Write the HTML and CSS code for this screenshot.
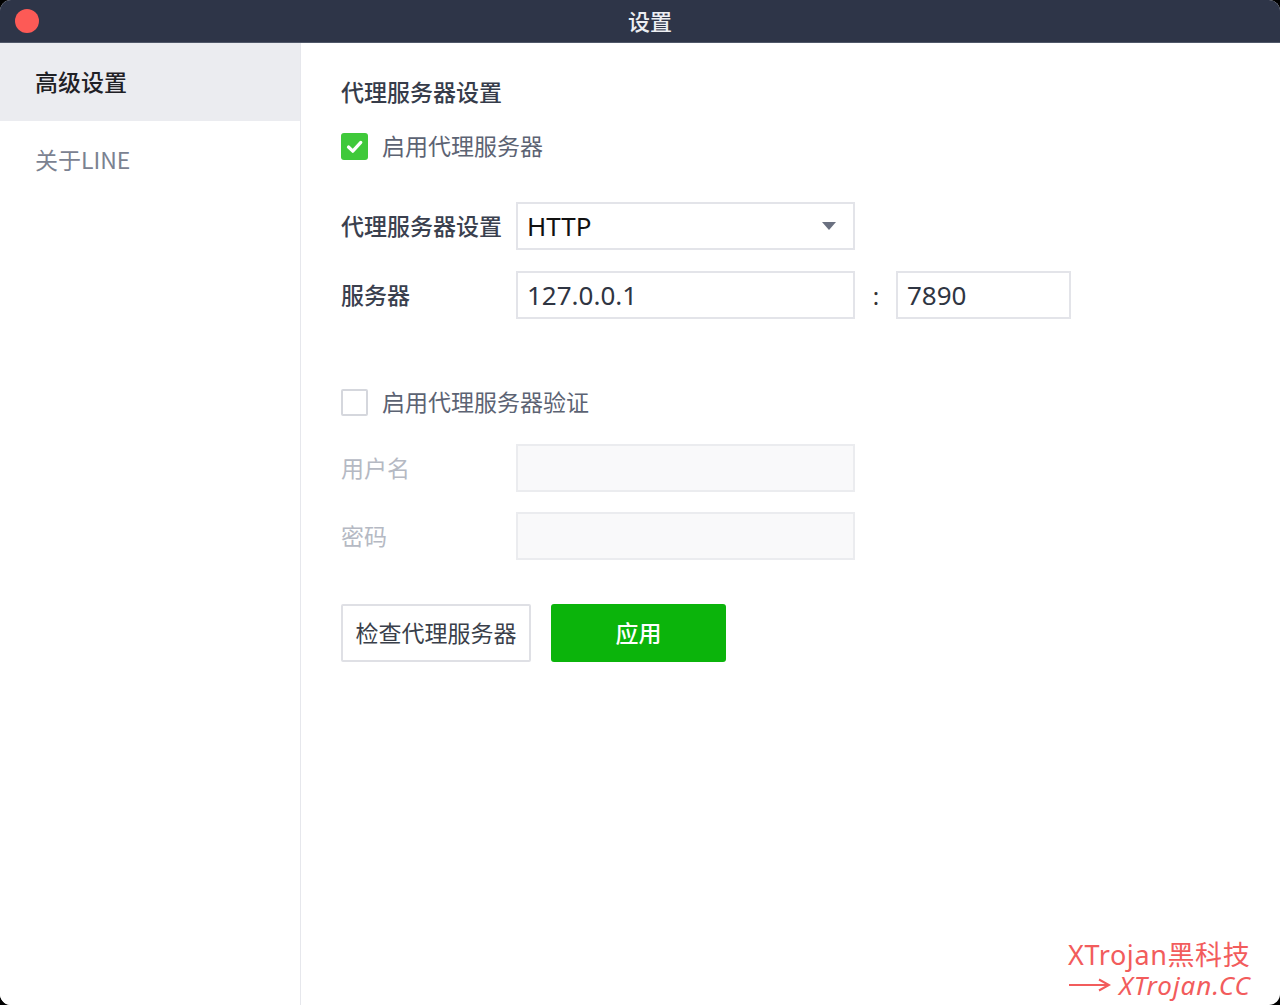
FILE: index.html
```html
<!DOCTYPE html>
<html lang="zh-CN">
<head>
<meta charset="utf-8">
<title>设置</title>
<link rel="stylesheet" href="styles.css">
</head>
<body>
<div class="window">
  <header class="titlebar">
    <span class="close-dot"></span>
    <span class="title">设置</span>
  </header>
  <div class="main">
    <nav class="sidebar">
      <div class="nav-item active">高级设置</div>
      <div class="nav-item">关于LINE</div>
    </nav>
    <section class="content">
      <h2 class="heading">代理服务器设置</h2>
      <label class="check-row">
        <span class="checkbox checked">
          <svg viewBox="0 0 27 27" width="27" height="27"><path d="M7.5 14 L11.8 18.2 L19.8 9.4" fill="none" stroke="#fff" stroke-width="3.2" stroke-linecap="round" stroke-linejoin="round"/></svg>
        </span>
        <span class="check-label">启用代理服务器</span>
      </label>

      <div class="form-row row-type">
        <span class="label">代理服务器设置</span>
        <div class="field select">
          <span class="value value-dark">HTTP</span>
          <svg class="caret" viewBox="0 0 14 8" width="14" height="8"><path d="M0 0 H14 L7 8 Z" fill="#6a7080"/></svg>
        </div>
      </div>
      <div class="form-row row-server">
        <span class="label">服务器</span>
        <div class="field"><span class="value">127.0.0.1</span></div>
        <span class="colon">:</span>
        <div class="field port"><span class="value">7890</span></div>
      </div>

      <label class="check-row check-auth">
        <span class="checkbox"></span>
        <span class="check-label">启用代理服务器验证</span>
      </label>

      <div class="form-row row-user">
        <span class="label disabled">用户名</span>
        <div class="field field-disabled"></div>
      </div>
      <div class="form-row row-pass">
        <span class="label disabled">密码</span>
        <div class="field field-disabled"></div>
      </div>

      <div class="buttons">
        <button class="btn btn-outline">检查代理服务器</button>
        <button class="btn btn-green">应用</button>
      </div>
    </section>
  </div>
  <div class="watermark">
    <div class="wm-line1">XTrojan黑科技</div>
    <div class="wm-line2"><svg class="wm-arrow" viewBox="0 0 42 14" width="42" height="14"><path d="M0 7 H40 M30 1.5 L40 7 L30 12.5" fill="none" stroke="#f25c5c" stroke-width="2"/></svg><span class="wm-site">XTrojan.CC</span></div>
  </div>
</div>
</body>
</html>
```

FILE: styles.css
```css
* { box-sizing: border-box; }
html, body {
  margin: 0;
  padding: 0;
  background: #000;
}
body {
  width: 1280px;
  height: 1005px;
  font-family: "Noto Sans", "Noto Sans CJK SC", sans-serif;
  overflow: hidden;
}
.window {
  position: relative;
  width: 1280px;
  height: 1005px;
  background: #fff;
  border-radius: 11px;
  overflow: hidden;
  display: flex;
  flex-direction: column;
}
.titlebar {
  position: relative;
  height: 43px;
  flex: 0 0 43px;
  background: #2e3548;
  border-bottom: 1px solid #505869;
  display: flex;
  align-items: center;
  justify-content: center;
}
.close-dot {
  position: absolute;
  left: 15px;
  top: 9px;
  width: 24px;
  height: 24px;
  border-radius: 50%;
  background: #fd5a56;
}
.title {
  color: #eceef2;
  font-family: "Noto Sans CJK SC", sans-serif;
  font-size: 22px;
  font-weight: 500;
  line-height: 42px;
  margin-top: -3px;
  margin-left: 20px;
}
.main {
  flex: 1;
  display: flex;
}
.sidebar {
  width: 301px;
  flex: 0 0 301px;
  border-right: 1px solid #e6e7ec;
  background: #fff;
}
.nav-item {
  height: 78px;
  display: flex;
  align-items: center;
  padding-left: 35px;
  padding-bottom: 3px;
  font-family: "Noto Sans CJK SC", sans-serif;
  font-size: 23px;
  color: #7b8291;
}
.nav-item.active {
  background: #ebecf0;
  color: #1f2126;
  font-weight: 500;
}
.content {
  flex: 1;
  padding: 32px 0 0 40px;
  font-family: "Noto Sans CJK SC", sans-serif;
}
.heading {
  margin: 0;
  font-size: 23px;
  font-weight: 500;
  line-height: 32px;
  color: #363c4a;
}
.check-row {
  display: flex;
  align-items: center;
  height: 30px;
  margin-top: 24px;
}
.checkbox {
  width: 27px;
  height: 27px;
  border: 2px solid #d5d7dd;
  border-radius: 2px;
  background: #fff;
  display: flex;
}
.checkbox.checked {
  border: none;
  background: #3fc93a;
  border-radius: 3px;
}
.check-label {
  margin-left: 14px;
  font-size: 23px;
  color: #5c6373;
  line-height: 30px;
  margin-top: -3px;
}
.form-row {
  display: flex;
  align-items: center;
  height: 48px;
}
.row-type { margin-top: 41px; }
.row-server { margin-top: 21px; }
.check-auth { margin-top: 68px; }
.row-user { margin-top: 27px; }
.row-pass { margin-top: 20px; }
.label {
  width: 175px;
  flex: 0 0 175px;
  font-size: 23px;
  font-weight: 500;
  color: #3a404e;
  margin-top: -3px;
}
.label.disabled { color: #b5b9c3; font-weight: 400; }
.field {
  width: 339px;
  height: 48px;
  border: 2px solid #e3e4e9;
  display: flex;
  align-items: center;
  padding-left: 9px;
  background: #fff;
}
.field-disabled {
  background: #f9f9fa;
  border-color: #ebecef;
}
.select { justify-content: space-between; padding-right: 17px; }
.value {
  font-family: "Noto Sans", sans-serif;
  font-size: 26px;
  color: #2f3542;
  line-height: 1;
}
.value-dark { color: #111; }
.caret { display: block; }
.colon {
  width: 41px;
  text-align: center;
  font-family: "Noto Sans", sans-serif;
  font-size: 24px;
  color: #333;
  padding-left: 1px;
}
.port { width: 175px; }
.buttons {
  display: flex;
  gap: 20px;
  margin-top: 44px;
}
.btn {
  height: 58px;
  font-family: "Noto Sans CJK SC", sans-serif;
  font-size: 23px;
  padding: 0 0 3px;
  cursor: pointer;
}
.btn-outline {
  width: 190px;
  background: #fff;
  border: 2px solid #dfe0e5;
  color: #3a3f4a;
  border-radius: 2px;
}
.btn-green {
  width: 175px;
  background: #0bb40b;
  border: none;
  color: #fff;
  border-radius: 3px;
  font-weight: 500;
}
.watermark {
  position: absolute;
  left: 1068px;
  top: 940px;
  color: #f25c5c;
  font-family: "Noto Sans", "Noto Sans CJK SC", sans-serif;
}
.wm-line1 {
  font-size: 27px;
  line-height: 30px;
  height: 30px;
  letter-spacing: 0.6px;
  white-space: nowrap;
}
.wm-line2 {
  display: flex;
  align-items: center;
  height: 30px;
  white-space: nowrap;
}
.wm-arrow { display: block; margin-right: 8px; margin-left: 1px; }
.wm-site {
  font-style: italic;
  font-size: 26px;
  line-height: 30px;
  letter-spacing: 1px;
}
```
